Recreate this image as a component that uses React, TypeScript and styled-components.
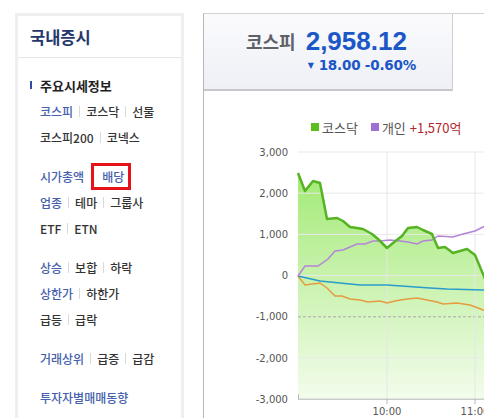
import React from "react";
import styled, { createGlobalStyle } from "styled-components";

const GlobalStyle = createGlobalStyle`
  html, body {
    margin: 0;
    background: #fff;
  }
  body {
    font-family: "Noto Sans CJK KR", "Noto Sans", sans-serif;
  }
`;

const Page = styled.div`
  display: flex;
  gap: 19px;
  height: 418px;
  padding: 13px 0 0 15px;
  box-sizing: border-box;
  overflow: hidden;
`;

/* ---------- left navigation ---------- */

const Nav = styled.nav`
  width: 169px;
  flex-shrink: 0;
  border: 3px solid #efefef;
  border-bottom: none;
  box-sizing: border-box;
`;

const NavHeader = styled.h2`
  margin: 0;
  height: 41px;
  display: flex;
  align-items: center;
  padding-left: 12px;
  font-size: 16.5px;
  font-weight: 700;
  color: #26376b;
  border-bottom: 1px solid #e6e6e6;
`;

const NavBody = styled.div`
  padding: 14px 0 0 22px;
`;

const SectionTitle = styled.div`
  display: flex;
  align-items: center;
  height: 26px;
  margin-left: -10px;
  font-size: 13px;
  font-weight: 700;
  color: #222;

  &::before {
    content: "";
    width: 2px;
    height: 8px;
    margin-right: 8px;
    background: #2f4ea3;
  }
`;

const Group = styled.div`
  & + & {
    margin-top: 13px;
  }
`;

const Row = styled.div`
  display: flex;
  align-items: center;
  height: 26px;
  font-size: 12px;
  font-weight: 500;
  white-space: nowrap;
`;

const Link = styled.span<{ $active?: boolean }>`
  color: ${(p) => (p.$active ? "#4560ac" : "#333")};
`;

const Sep = styled.span`
  width: 1px;
  height: 11px;
  margin: 0 6px;
  background: #dadada;
`;

const Marked = styled.span`
  display: inline-flex;
  align-items: center;
  height: 21px;
  margin-left: 7px;
  padding: 0 4px 0 8px;
  border: 3px solid #e5121a;
  color: #4560ac;
`;

type Item = { label: string; active?: boolean; marked?: boolean };

const groups: Item[][][] = [
  [
    [{ label: "코스피", active: true }, { label: "코스닥" }, { label: "선물" }],
    [{ label: "코스피200" }, { label: "코넥스" }],
  ],
  [
    [{ label: "시가총액", active: true }, { label: "배당", marked: true }],
    [{ label: "업종", active: true }, { label: "테마" }, { label: "그룹사" }],
    [{ label: "ETF" }, { label: "ETN" }],
  ],
  [
    [{ label: "상승", active: true }, { label: "보합" }, { label: "하락" }],
    [{ label: "상한가", active: true }, { label: "하한가" }],
    [{ label: "급등" }, { label: "급락" }],
  ],
  [[{ label: "거래상위", active: true }, { label: "급증" }, { label: "급감" }]],
  [
    [{ label: "투자자별매매동향", active: true }],
    [{ label: "외국인매매" }, { label: "기관매매" }],
  ],
];

function NavRow({ items }: { items: Item[] }) {
  return (
    <Row>
      {items.map((it, i) => (
        <React.Fragment key={it.label}>
          {it.marked ? (
            <Marked>{it.label}</Marked>
          ) : (
            <>
              {i > 0 && <Sep />}
              <Link $active={it.active}>{it.label}</Link>
            </>
          )}
        </React.Fragment>
      ))}
    </Row>
  );
}

/* ---------- chart panel ---------- */

const ChartPanel = styled.section`
  flex: 1;
  min-width: 0;
  border-top: 1px solid #d2d2d2;
  border-left: 1px solid #b8b8b8;
  overflow: hidden;
`;

const IndexTab = styled.div`
  width: 249px;
  height: 77px;
  display: grid;
  grid-template-columns: auto auto;
  justify-content: start;
  align-content: center;
  column-gap: 10px;
  padding: 0 0 2px 42px;
  box-sizing: border-box;
  background: linear-gradient(#fbfbfd, #eef0f6);
  border-right: 1px solid #cfcfcf;
  border-bottom: 2px solid #c6c8cd;
`;

const IndexName = styled.span`
  align-self: center;
  font-size: 18px;
  font-weight: 700;
  color: #5f6169;
`;

const IndexValue = styled.span`
  font-family: "Liberation Sans", Arial, sans-serif;
  font-size: 26px;
  font-weight: 700;
  line-height: 30px;
  color: #1b57c6;
`;

const IndexChange = styled.span`
  grid-column: 2;
  display: flex;
  align-items: center;
  gap: 5px;
  padding-left: 2px;
  font-family: "DejaVu Sans", Verdana, sans-serif;
  font-size: 13.5px;
  font-weight: 700;
  color: #1b57c6;
  line-height: 19px;
  letter-spacing: -0.2px;
`;

const Arrow = styled.span`
  font-size: 8px;
`;

const Legend = styled.div`
  display: flex;
  align-items: center;
  height: 18px;
  margin: 27px 0 0 107px;
  font-size: 13px;
  color: #555;
  white-space: nowrap;
`;

const Swatch = styled.span<{ $color: string }>`
  width: 8px;
  height: 8px;
  margin-right: 3px;
  background: ${(p) => p.$color};
`;

const LegendItem = styled.span`
  display: flex;
  align-items: center;
  margin-right: 13px;
`;

const Amount = styled.span`
  margin-left: 4px;
  color: #b3262c;
`;

const Chart = styled.svg`
  display: block;
  margin-top: 5px;
`;

const yTicks = [
  { v: "3,000", y: 11 },
  { v: "2,000", y: 52.2 },
  { v: "1,000", y: 93.4 },
  { v: "0", y: 134.6 },
  { v: "-1,000", y: 175.8 },
  { v: "-2,000", y: 217 },
  { v: "-3,000", y: 258.2 },
];

const kosdaq = [
  [94, 32], [101, 50], [109, 40], [116, 42], [123, 78], [133, 77], [139, 80],
  [146, 86], [153, 87], [159, 88], [168, 93], [174, 98], [183, 107], [189, 102],
  [198, 95], [204, 87], [213, 86], [219, 89], [228, 93], [234, 107], [241, 106],
  [249, 112], [256, 110], [263, 108], [271, 114], [279, 133], [286, 150],
];

const retail = [
  [94, 135], [101, 125], [114, 125], [124, 118], [131, 110], [139, 109],
  [146, 106], [153, 103], [161, 103], [169, 100], [176, 100], [186, 99],
  [196, 100], [204, 101], [213, 103], [219, 100], [228, 99], [234, 95],
  [249, 96], [259, 93], [271, 90], [279, 86], [286, 82],
];

const foreign = [
  [94, 135], [116, 140], [156, 144], [183, 144], [226, 147], [243, 148],
  [279, 149], [290, 149.5],
];

const institution = [
  [94, 135], [101, 144], [116, 142], [123, 147], [131, 155], [138, 155],
  [146, 158], [156, 159], [164, 161], [176, 160], [183, 162], [191, 160],
  [203, 158], [213, 157], [223, 159], [233, 161], [239, 163], [253, 162],
  [266, 164], [274, 167], [279, 169], [286, 171],
];

const pts = (d: number[][]) => d.map(([x, y]) => `${x},${y}`).join(" ");

const axisFont = "DejaVu Sans, Verdana, sans-serif";

function FlowChart() {
  const bottom = 258.2;
  const area = `94,${bottom} ${pts(kosdaq)} 286,${bottom}`;
  return (
    <Chart width={280} height={290} viewBox="0 0 280 290">
      <defs>
        <linearGradient id="kosdaqFill" x1="0" y1="0" x2="0" y2="1">
          <stop offset="0" stopColor="#a3ea76" />
          <stop offset="1" stopColor="#f3fcec" />
        </linearGradient>
      </defs>
      <polygon points={area} fill="url(#kosdaqFill)" />
      {yTicks.map((t) => (
        <g key={t.v}>
          {t.v !== "-3,000" && (
            <line
              x1={94}
              x2={280}
              y1={t.y}
              y2={t.y}
              stroke={t.v === "-1,000" ? "#a8a8a8" : "#e9e9e9"}
              strokeDasharray={t.v === "-1,000" ? "3 2" : undefined}
              strokeWidth={1}
            />
          )}
          <text x={84} y={t.y + 3.5} textAnchor="end" fontFamily={axisFont} fontSize={10} fill="#555">
            {t.v}
          </text>
        </g>
      ))}
      <line x1={183} x2={183} y1={11} y2={bottom} stroke="#e6e6e6" />
      <line x1={271} x2={271} y1={11} y2={bottom} stroke="#e6e6e6" />
      <line x1={94} x2={280} y1={bottom} y2={bottom} stroke="#b5b5b5" />
      <line x1={94.5} x2={94.5} y1={bottom - 5} y2={bottom} stroke="#b5b5b5" />
      <line x1={183} x2={183} y1={bottom} y2={bottom + 5} stroke="#b5b5b5" />
      <line x1={271} x2={271} y1={bottom} y2={bottom + 5} stroke="#b5b5b5" />
      <polyline points={pts(institution)} fill="none" stroke="#e49c3f" strokeWidth={1.5} />
      <polyline points={pts(foreign)} fill="none" stroke="#2a9ccc" strokeWidth={1.6} />
      <polyline points={pts(retail)} fill="none" stroke="#b484d8" strokeWidth={1.5} />
      <polyline points={pts(kosdaq)} fill="none" stroke="#56b323" strokeWidth={2.5} strokeLinejoin="round" />
      <text x={183} y={274} textAnchor="middle" fontFamily={axisFont} fontSize={10} fill="#555">
        10:00
      </text>
      <text x={271} y={274} textAnchor="middle" fontFamily={axisFont} fontSize={10} fill="#555">
        11:00
      </text>
    </Chart>
  );
}

export default function App() {
  return (
    <>
      <GlobalStyle />
      <Page>
        <Nav>
          <NavHeader>국내증시</NavHeader>
          <NavBody>
            <SectionTitle>주요시세정보</SectionTitle>
            {groups.map((rows, gi) => (
              <Group key={gi}>
                {rows.map((items, ri) => (
                  <NavRow key={ri} items={items} />
                ))}
              </Group>
            ))}
          </NavBody>
        </Nav>
        <ChartPanel>
          <IndexTab>
            <IndexName>코스피</IndexName>
            <IndexValue>2,958.12</IndexValue>
            <IndexChange>
              <Arrow>▼</Arrow>
              18.00 -0.60%
            </IndexChange>
          </IndexTab>
          <Legend>
            <LegendItem>
              <Swatch $color="#5cbf1d" />
              코스닥
            </LegendItem>
            <Swatch $color="#9f6fd4" />
            개인
            <Amount>+1,570억</Amount>
          </Legend>
          <FlowChart />
        </ChartPanel>
      </Page>
    </>
  );
}
